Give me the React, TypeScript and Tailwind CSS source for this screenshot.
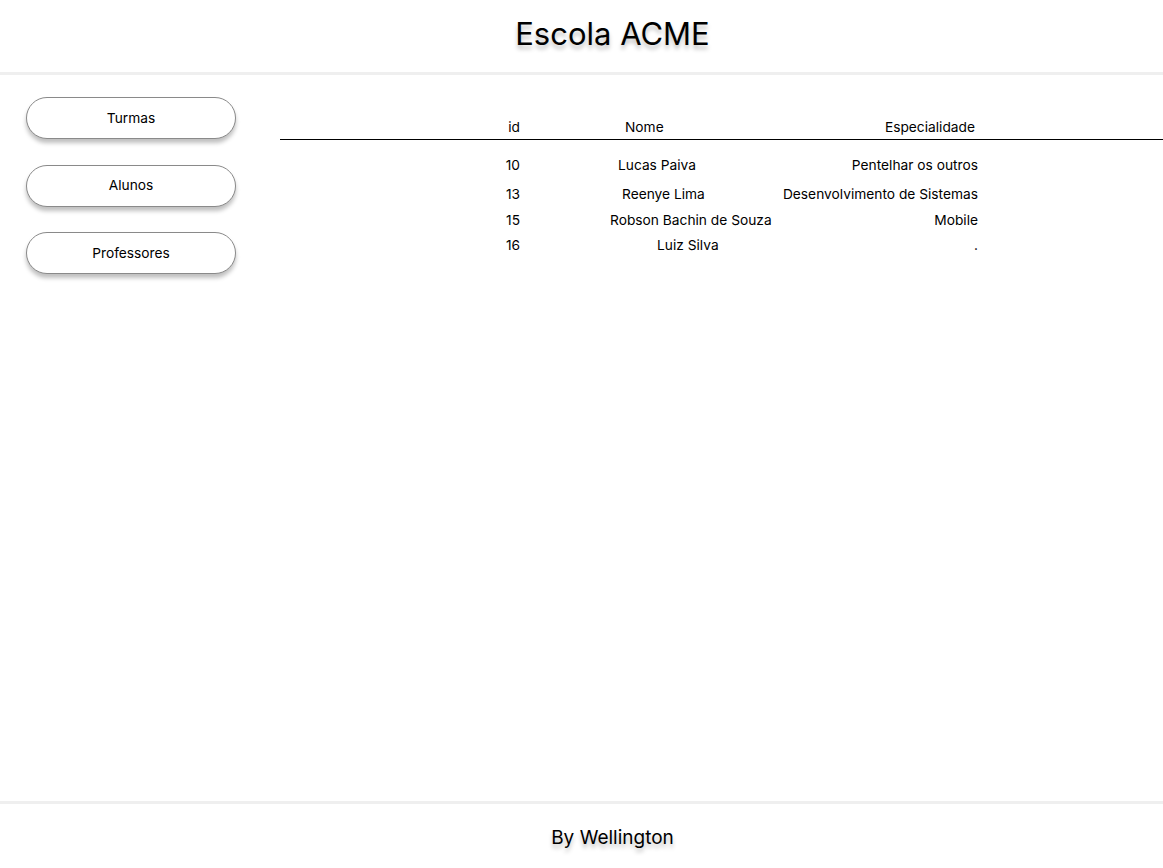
import React from "react";

const rows = [
  { id: "10", name: "Lucas Paiva", nameCls: "pl-[98px]", esp: "Pentelhar os outros", rowCls: "mt-[15px]" },
  { id: "13", name: "Reenye Lima", nameCls: "pl-[102px]", esp: "Desenvolvimento de Sistemas", rowCls: "mt-[9px]" },
  { id: "15", name: "Robson Bachin de Souza", nameCls: "pl-[90px]", esp: "Mobile", rowCls: "mt-[6px]" },
  { id: "16", name: "Luiz Silva", nameCls: "pl-[137px]", esp: ".", rowCls: "mt-[5px]" },
];

export default function App() {
  return (
    <div
      className="flex h-[868px] w-full flex-col bg-white text-black"
      style={{ fontFamily: "Inter, 'Noto Sans', sans-serif" }}
    >
      <header className="flex h-[75px] shrink-0 items-center justify-center border-b-[3px] border-[#efefef] pb-[6px] pl-[62px]">
        <h1 className="text-[31px] leading-none [text-shadow:0_4px_4px_rgba(0,0,0,0.25)]">Escola ACME</h1>
      </header>
      <main className="flex flex-1">
        <nav className="flex w-[280px] shrink-0 flex-col gap-[25.5px] pl-[26px] pt-[22px]">
          {["Turmas", "Alunos", "Professores"].map((t) => (
            <button
              key={t}
              className="flex h-[42px] w-[210px] items-center justify-center rounded-full border border-[#8a8a8a] bg-white text-[13.75px] shadow-[0_4px_4px_rgba(0,0,0,0.25)]"
            >
              {t}
            </button>
          ))}
        </nav>
        <section className="flex-1 whitespace-nowrap pt-[42px] text-[13.75px]">
          <div className="grid h-[23px] grid-cols-[240px_240px_220px] border-b border-black leading-[20px]">
            <div className="text-right">id</div>
            <div className="pl-[105px]">Nome</div>
            <div className="pr-[5px] text-right">Especialidade</div>
          </div>
          {rows.map((r) => (
            <div key={r.id} className={`grid grid-cols-[240px_240px_220px] leading-[20px] ${r.rowCls}`}>
              <div className="text-right">{r.id}</div>
              <div className={r.nameCls}>{r.name}</div>
              <div className="pr-[2px] text-right">{r.esp}</div>
            </div>
          ))}
        </section>
      </main>
      <footer className="flex h-[67px] shrink-0 items-center justify-center border-t-[3px] border-[#efefef] pl-[62px] pt-[4px]">
        <span className="text-[19px] [text-shadow:0_4px_4px_rgba(0,0,0,0.25)]">By Wellington</span>
      </footer>
    </div>
  );
}
